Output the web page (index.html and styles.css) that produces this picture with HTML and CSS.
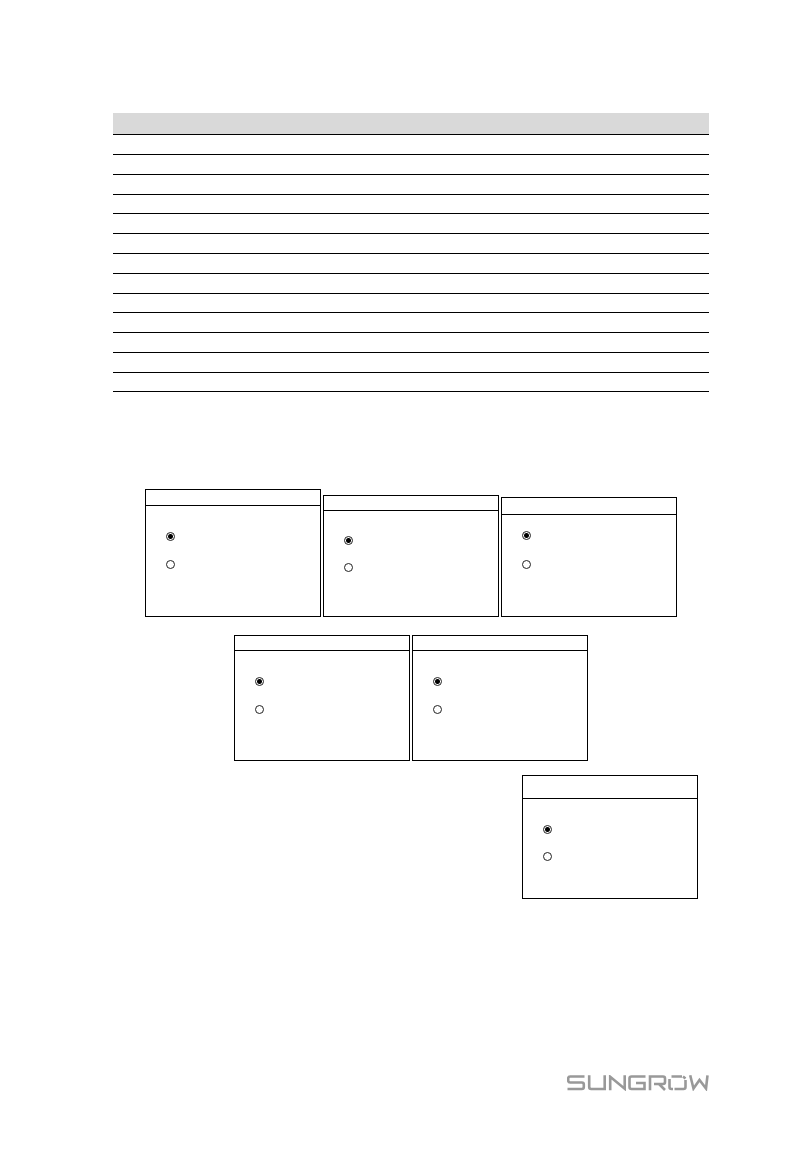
FILE: index.html
```html
<!DOCTYPE html>
<html lang="en">
<head>
    <meta charset="UTF-8">
    <meta name="viewport" content="width=device-width, initial-scale=1.0">
    <title>Sungrow</title>
    <link rel="stylesheet" href="styles.css">
</head>
<body>
    <main class="page">
        <table class="params">
            <thead>
                <tr><th></th></tr>
            </thead>
            <tbody>
                <tr><td></td></tr>
                <tr><td></td></tr>
                <tr><td></td></tr>
                <tr><td></td></tr>
                <tr><td></td></tr>
                <tr><td></td></tr>
                <tr><td></td></tr>
                <tr><td></td></tr>
                <tr><td></td></tr>
                <tr><td></td></tr>
                <tr><td></td></tr>
                <tr><td></td></tr>
                <tr><td></td></tr>
            </tbody>
        </table>

        <section class="screens">
            <div class="screen screen-a">
                <div class="screen-title"></div>
                <div class="options">
                    <input type="radio" name="s1" aria-label="Option 1" checked>
                    <input type="radio" name="s1" aria-label="Option 2">
                </div>
            </div>
            <div class="screen screen-b">
                <div class="screen-title"></div>
                <div class="options">
                    <input type="radio" name="s2" aria-label="Option 1" checked>
                    <input type="radio" name="s2" aria-label="Option 2">
                </div>
            </div>
            <div class="screen screen-c">
                <div class="screen-title"></div>
                <div class="options">
                    <input type="radio" name="s3" aria-label="Option 1" checked>
                    <input type="radio" name="s3" aria-label="Option 2">
                </div>
            </div>
        </section>

        <section class="screens">
            <div class="screen">
                <div class="screen-title"></div>
                <div class="options">
                    <input type="radio" name="s4" aria-label="Option 1" checked>
                    <input type="radio" name="s4" aria-label="Option 2">
                </div>
            </div>
            <div class="screen">
                <div class="screen-title"></div>
                <div class="options">
                    <input type="radio" name="s5" aria-label="Option 1" checked>
                    <input type="radio" name="s5" aria-label="Option 2">
                </div>
            </div>
        </section>

        <section class="screens screens-right">
            <div class="screen screen-d">
                <div class="screen-title"></div>
                <div class="options">
                    <input type="radio" name="s6" aria-label="Option 1" checked>
                    <input type="radio" name="s6" aria-label="Option 2">
                </div>
            </div>
        </section>

        <footer class="footer">
            <svg class="logo" viewBox="0 0 142 16" role="img" aria-label="Sungrow">
                <path d="M17.500 1.500H3.200Q1.200 1.500 1.200 3.500V5.500Q1.200 7.500 3.200 7.500H14.800Q16.800 7.500 16.800 9.500V12Q16.800 14 14.800 14H0.500"/>
                <path d="M22.200 0.300V12Q22.200 14 24.200 14H37.700V0.300"/>
                <path d="M43.200 15.200V1.800L57.700 13.700V0.300"/>
                <path d="M78.500 1.500H64.500Q62.500 1.500 62.500 3.500V12Q62.500 14 64.500 14H77.500V8H69"/>
                <path d="M83 15.200V1.500H96Q98 1.500 98 3.500V7Q98 9 96 9H87M92 9L98 15"/>
                <path d="M102.500 4V12Q102.500 14 104.500 14H106M104.500 1.500H115"/>
                <path d="M107.500 14H116.500Q118.500 14 118.500 12V5M116 1.500L118.500 3.500"/>
                <path d="M123.200 0.300L126.500 13.500L132.500 5L139 13.500L140.500 0.300"/>
            </svg>
        </footer>
    </main>
</body>
</html>
```

FILE: styles.css
```css
* {
    box-sizing: border-box;
}
body {
    margin: 0;
    background-color: #fff;
    font-family: "Liberation Sans", Arial, sans-serif;
}
.page {
    padding: 113px 85px 60px 113px;
}
.params {
    width: 100%;
    border-collapse: separate;
    border-spacing: 0;
}
.params th {
    height: 22px;
    padding: 0;
    background-color: #d9d9d9;
    border-bottom: 1px solid #000;
}
.params td {
    height: 20px;
    padding: 0;
    border-bottom: 1px solid #000;
}
.params tr:nth-child(5n+4) td,
.params tr:last-child td {
    height: 19px;
}
.screens {
    display: flex;
    justify-content: center;
    align-items: flex-end;
    gap: 2px;
    margin-top: 18px;
}
.params + .screens {
    margin-top: 97px;
}
.screens-right {
    justify-content: flex-end;
    margin-top: 14px;
    padding-right: 11px;
}
.screen {
    width: 176px;
    height: 126px;
    border: 1px solid #000;
}
.screen-title {
    height: 15px;
    border-bottom: 1px solid #000;
}
.options {
    display: flex;
    flex-direction: column;
    gap: 19px;
    padding: 26px 20px 0;
}
.options input {
    appearance: none;
    width: 9px;
    height: 9px;
    margin: 0;
    border: 1px solid #222;
    border-radius: 50%;
}
.options input:checked {
    background: radial-gradient(circle, #000 2px, #fff 3px);
}

/* Screen variants */
.screen-a {
    height: 128px;
}
.screen-a .screen-title {
    height: 16px;
}
.screen-b {
    height: 122px;
}
.screen-b .options {
    gap: 18px;
    padding-top: 25px;
}
.screen-c {
    height: 120px;
}
.screen-c .screen-title {
    height: 17px;
}
.screen-c .options {
    gap: 20px;
    padding-top: 16px;
}
.screen-d {
    height: 124px;
}
.screen-d .screen-title {
    height: 23px;
}
.screen-d .options {
    gap: 18px;
}

.footer {
    display: flex;
    justify-content: flex-end;
    margin-top: 176px;
}
.logo {
    width: 142px;
    height: 16px;
    fill: none;
    stroke: #999;
    stroke-width: 2.6;
}
```
